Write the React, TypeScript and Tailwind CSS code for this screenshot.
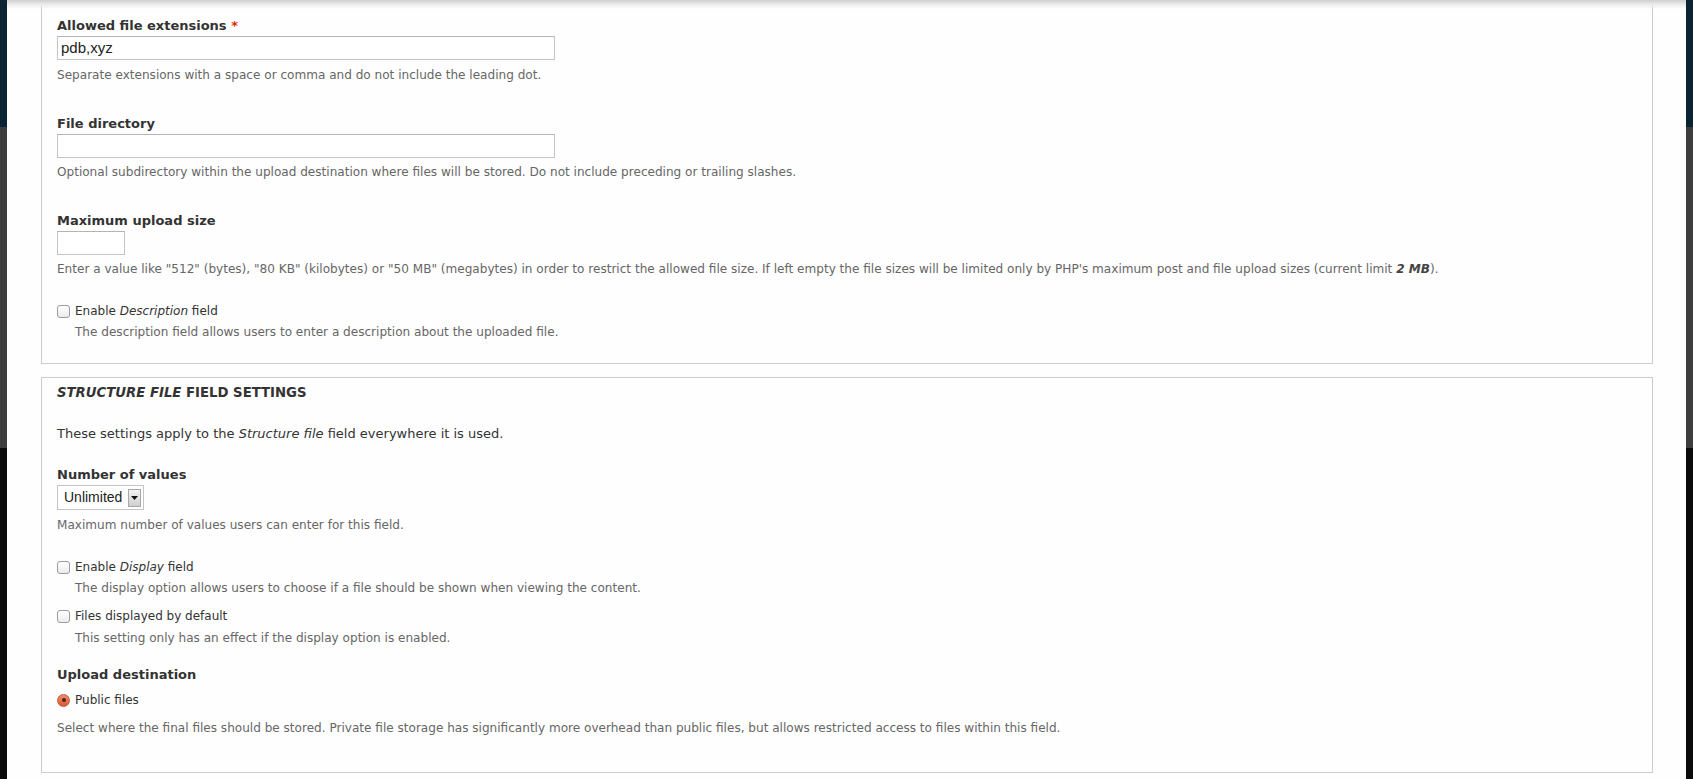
import React from "react";

const FONT = { fontFamily: '"DejaVu Sans", Verdana, sans-serif' };
const ARIAL = { fontFamily: '"Liberation Sans", Arial, sans-serif' };

function Strip() {
  return (
    <div className="flex w-[7px] shrink-0 flex-col">
      <div className="h-[127px] bg-[#0b2434]" />
      <div className="h-[321px] bg-[#3d3d3d]" />
      <div className="flex-1 bg-[#0b0b0b]" />
    </div>
  );
}

function Label({ children, className = "" }: { children: React.ReactNode; className?: string }) {
  return (
    <div className={`h-[18px] text-[13px] leading-[18px] font-bold text-[#333] ${className}`}>{children}</div>
  );
}

function Desc({ children, className = "" }: { children: React.ReactNode; className?: string }) {
  return (
    <div className={`h-[18px] text-[12.07px] leading-[18px] text-[#666] whitespace-nowrap ${className}`}>{children}</div>
  );
}

function Checkbox() {
  return (
    <span className="inline-block h-[13px] w-[13px] shrink-0 rounded-[3px] border border-[#9c9c9c] bg-gradient-to-b from-white to-[#ececec]" />
  );
}

function CheckRow({ children, className = "" }: { children: React.ReactNode; className?: string }) {
  return (
    <div className={`flex h-[18px] items-center gap-[5px] text-[12px] leading-[18px] text-[#333] ${className}`}>
      <Checkbox />
      <span>{children}</span>
    </div>
  );
}

function TextInput({ value = "", className = "" }: { value?: string; className?: string }) {
  return (
    <div
      className={`flex h-[24px] items-center border border-[#c4c4c4] border-t-[#b4b4b4] bg-white px-[3px] text-[15px] text-[#222] ${className}`}
      style={ARIAL}
    >
      {value}
    </div>
  );
}

export default function App() {
  return (
    <div className="flex h-[779px] w-full overflow-hidden bg-[#0b0b0b]" style={FONT}>
      <Strip />
      <div className="relative flex-1 bg-[#fefefe]">
        <div className="pointer-events-none absolute left-0 right-0 top-0 h-[9px] bg-gradient-to-b from-[#cfcfcf] via-[#ececec] to-transparent" />

        {/* Fieldset 1 (top cut off) */}
        <div className="ml-[34px] mr-[33px] border-x border-b border-[#cccccc] pl-[15px] pt-[17px] pb-[22px]">
          <Label>
            Allowed file extensions <span className="text-[#e32700]">*</span>
          </Label>
          <TextInput value="pdb,xyz" className="mt-[1px] w-[498px]" />
          <Desc className="mt-[6px]">
            Separate extensions with a space or comma and do not include the leading dot.
          </Desc>

          <Label className="mt-[31px]">File directory</Label>
          <TextInput className="mt-[1px] w-[498px]" />
          <Desc className="mt-[5px]">
            Optional subdirectory within the upload destination where files will be stored. Do not include preceding or trailing slashes.
          </Desc>

          <Label className="mt-[31px]">Maximum upload size</Label>
          <TextInput className="mt-[1px] w-[68px]" />
          <Desc className="mt-[5px]">
            Enter a value like "512" (bytes), "80 KB" (kilobytes) or "50 MB" (megabytes) in order to restrict the allowed file size. If left empty the file sizes will be limited only by PHP's maximum post and file upload sizes (current limit <strong className="font-bold italic text-[#444]">2 MB</strong>).
          </Desc>

          <CheckRow className="mt-[24px]">
            Enable <em>Description</em> field
          </CheckRow>
          <Desc className="mt-[3px] pl-[18px]">
            The description field allows users to enter a description about the uploaded file.
          </Desc>
        </div>

        {/* Fieldset 2 */}
        <div className="ml-[34px] mr-[33px] mt-[13px] border border-[#cccccc] pl-[15px] pt-[6px] pb-[35px]">
          <div className="h-[18px] text-[13.25px] leading-[18px] font-bold uppercase text-[#333]">
            <em>Structure file</em> field settings
          </div>
          <div className="mt-[23px] h-[18px] text-[13px] leading-[18px] text-[#333]">
            These settings apply to the <em>Structure file</em> field everywhere it is used.
          </div>

          <Label className="mt-[23px]">Number of values</Label>
          <div
            className="mt-[1px] flex h-[25px] w-[87px] items-center justify-between border border-[#c4c4c4] bg-white pl-[6px] pr-[2px] text-[14px] text-[#222]"
            style={ARIAL}
          >
            <span>Unlimited</span>
            <span className="flex h-[18px] w-[13px] items-center justify-center border border-[#a8a8a8] bg-gradient-to-b from-[#f2f2f2] to-[#cfcfcf]">
              <svg width="7" height="4" viewBox="0 0 7 4">
                <path d="M0 0 L7 0 L3.5 4 Z" fill="#111" />
              </svg>
            </span>
          </div>
          <Desc className="mt-[6px]">Maximum number of values users can enter for this field.</Desc>

          <CheckRow className="mt-[24px]">
            Enable <em>Display</em> field
          </CheckRow>
          <Desc className="mt-[3px] pl-[18px]">
            The display option allows users to choose if a file should be shown when viewing the content.
          </Desc>

          <CheckRow className="mt-[10px]">Files displayed by default</CheckRow>
          <Desc className="mt-[4px] pl-[18px]">This setting only has an effect if the display option is enabled.</Desc>

          <Label className="mt-[19px]">Upload destination</Label>
          <div className="mt-[7px] flex h-[18px] items-center gap-[5px] text-[12px] leading-[18px] text-[#333]">
            <span className="flex h-[13px] w-[13px] shrink-0 items-center justify-center rounded-full border border-[#c4583a] bg-gradient-to-b from-[#f08a6a] to-[#d95a37]">
              <span className="h-[4px] w-[4px] rounded-full bg-[#4a2418]" />
            </span>
            <span>Public files</span>
          </div>
          <Desc className="mt-[10px]">
            Select where the final files should be stored. Private file storage has significantly more overhead than public files, but allows restricted access to files within this field.
          </Desc>
        </div>
      </div>
      <Strip />
    </div>
  );
}
